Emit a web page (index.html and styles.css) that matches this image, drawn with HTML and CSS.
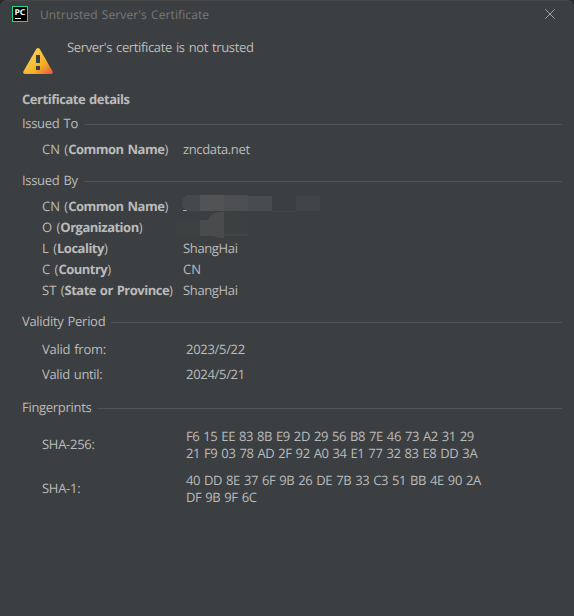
FILE: index.html
```html
<!DOCTYPE html>
<html lang="en">
<head>
<meta charset="utf-8">
<title>Untrusted Server's Certificate</title>
<link rel="stylesheet" href="styles.css">
</head>
<body>
<main class="dialog">
  <header class="titlebar">
    <svg class="logo" width="16" height="16" viewBox="0 0 16 16">
      <rect width="16" height="16" fill="#21d789"/>
      <rect x="1" y="1" width="14" height="14" fill="#000"/>
      <text class="logo-text" x="2.4" y="9" textLength="11" lengthAdjust="spacingAndGlyphs">PC</text>
      <rect x="3" y="12" width="6" height="1" fill="#fff"/>
    </svg>
    <span class="title">Untrusted Server's Certificate</span>
    <svg class="close" width="10" height="10" viewBox="0 0 10 10"><path d="M.3.3 9.7 9.7M9.7.3.3 9.7" stroke="#a0a2a3" stroke-width="1"/></svg>
  </header>
  <section class="alert">
    <svg class="warning" width="30" height="26" viewBox="0 0 30 26">
      <defs><linearGradient id="amber" x1="6" y1="5" x2="26" y2="28" gradientUnits="userSpaceOnUse"><stop offset="0" stop-color="#fccb4b"/><stop offset=".3" stop-color="#f9c23d"/><stop offset=".58" stop-color="#f4af22"/><stop offset="1" stop-color="#e9573f"/></linearGradient></defs>
      <path d="M13.2 1.1Q15-.9 16.8 1.1L29.6 23.5Q30.3 26 28 26H2Q-.3 26 .4 23.5Z" fill="url(#amber)"/>
      <path d="M13 7h4v8h-4zM13 18h4v4h-4z" fill="#3c3f41"/>
    </svg>
    <p class="message">Server's certificate is not trusted</p>
  </section>
  <h1 class="heading">Certificate details</h1>

  <h2 class="group">Issued To</h2>
  <dl class="names">
    <dt>CN (<b>Common Name</b>)</dt><dd>zncdata.net</dd>
  </dl>

  <h2 class="group by">Issued By</h2>
  <dl class="names issuer">
    <dt>CN (<b>Common Name</b>)</dt>
    <dd class="hidden-value">
      <svg class="redaction" width="152" height="48" viewBox="0 0 152 48">
        <path d="M7 17.5h4" stroke="#aaa"/>
        <path d="M12 2h12v16H12Q6 16 6 10 6 4 12 2" fill="#46494b"/>
        <path d="M24 2h24v16H24z" fill="#525355"/>
        <path d="M48 2h24v16H48z" fill="#4c4e51"/>
        <path d="M72 3h24v15H72z" fill="#494c4e"/>
        <path d="M96 18h24v1H96z" fill="#424547"/>
        <path d="M120 3h22q2 0 2 2v13h-24z" fill="#424547"/>
        <path d="M0 27h24v16H0z" fill="#3e4142"/>
        <path d="M24 27h8q3-9 16-8v26q-8 0-10-2H24z" fill="#4a4b4c"/>
        <path d="M48 19h12q12 2 13 8v14H48z" fill="#3d4040"/>
        <path d="M48 41h24v2H48z" fill="#434647"/>
      </svg>
    </dd>
    <dt>O (<b>Organization</b>)</dt><dd></dd>
    <dt>L (<b>Locality</b>)</dt><dd>ShangHai</dd>
    <dt>C (<b>Country</b>)</dt><dd class="code">CN</dd>
    <dt>ST (<b>State or Province</b>)</dt><dd>ShangHai</dd>
  </dl>

  <h2 class="group validity">Validity Period</h2>
  <dl class="facts dates">
    <dt>Valid from:</dt><dd>2023/5/22</dd>
    <dt class="until">Valid until:</dt><dd>2024/5/21</dd>
  </dl>

  <h2 class="group prints">Fingerprints</h2>
  <dl class="facts hashes">
    <dt>SHA-256:</dt>
    <dd>F6 15 EE 83 8B E9 2D 29 56 B8 7E 46 73 A2 31 29<br>21 F9 03 78 AD 2F 92 A0 34 E1 77 32 83 E8 DD 3A</dd>
    <dt>SHA-1:</dt>
    <dd>40 DD 8E 37 6F 9B 26 DE 7B 33 C3 51 BB 4E 90 2A<br>DF 9B 9F 6C</dd>
  </dl>
</main>
</body>
</html>
```
FILE: styles.css
```css
* { box-sizing: border-box; }
body { margin: 0; background: #2b2b2b; font: 13px/18px "Open Sans", sans-serif; color: #bbb; word-spacing: 1px; text-rendering: geometricPrecision; }
h1, h2, p, dl, dd { margin: 0; font-size: inherit; font-weight: 400; }
svg { display: block; flex: none; }
b { font-weight: 700; letter-spacing: -.5px; }
.dialog { height: 616px; background: #3c3f41; border-top: 1px solid #484848; border-radius: 7px 7px 0 0; white-space: nowrap; overflow: hidden; }
.titlebar { display: flex; height: 28px; padding: 5px 19px 0 12px; }
.logo-text { font: 700 8px "Open Sans", sans-serif; fill: #fff; }
.title { margin: 0 auto 0 12px; color: #777879; font-size: 12px; letter-spacing: .1px; }
.close { margin-top: 3px; }
.alert { display: flex; height: 61px; padding: 9px 0 0 23px; }
.warning { margin-top: 10px; }
.message { margin-left: 14px; letter-spacing: -.36px; }
.heading { margin-left: 22px; font-weight: 700; letter-spacing: -.47px; }
.group { display: flex; gap: 6px; margin: 6px 12px 0 22px; letter-spacing: -.3px; }
.group::after { content: ""; flex: 1; height: 1px; margin-top: 10px; background: #515354; }
.names { display: grid; grid-template-columns: 141px 1fr; grid-auto-rows: 18px; row-gap: 3px; margin: 8px 0 0 42px; }
.names dd { letter-spacing: -.36px; }
.names .code { letter-spacing: 0; }
.group.by { margin-top: 13px; }
.group.validity { margin-top: 13px; }
.group.prints { margin-top: 15px; }
.hidden-value { position: relative; }
.redaction { position: absolute; left: -7px; top: -4px; }
.facts { display: grid; grid-template-columns: 144px 1fr; margin-left: 42px; letter-spacing: -.27px; }
.facts dd { letter-spacing: -.3px; }
.facts .until { letter-spacing: -.35px; }
.dates { margin-top: 10px; row-gap: 7px; }
.hashes { margin-top: 12px; line-height: 17px; row-gap: 10px; align-items: center; }
.hashes dt { padding-bottom: 2px; }
.hashes dd { letter-spacing: -.4px; }
```
